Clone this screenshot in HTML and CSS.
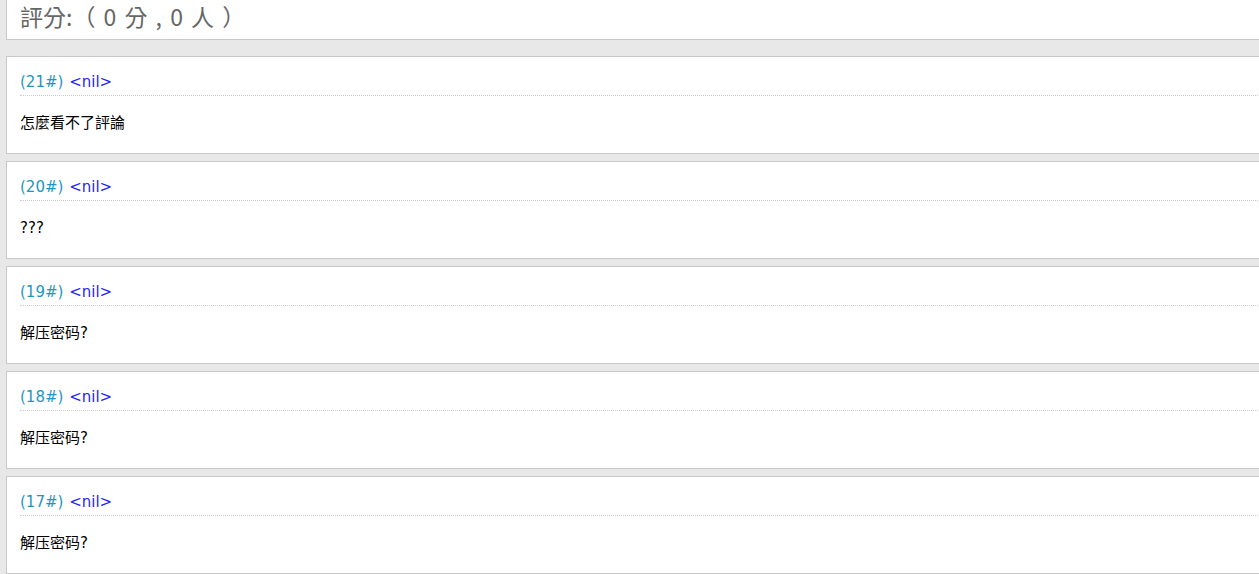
FILE: index.html
```html
<!DOCTYPE html>
<html lang="zh-Hant">
<head>
<meta charset="UTF-8" />
<title>評論</title>
<link rel="stylesheet" href="styles.css">
</head>
<body>
<div class="page">
  <div class="rating-box">評分:（ 0 分 , 0 人 ）</div>

  <div class="post">
    <div class="post-head"><span class="floor">(21#)</span> <span class="author">&lt;nil&gt;</span></div>
    <div class="post-body">怎麼看不了評論</div>
  </div>
  <div class="post">
    <div class="post-head"><span class="floor">(20#)</span> <span class="author">&lt;nil&gt;</span></div>
    <div class="post-body">???</div>
  </div>
  <div class="post">
    <div class="post-head"><span class="floor">(19#)</span> <span class="author">&lt;nil&gt;</span></div>
    <div class="post-body">解压密码?</div>
  </div>
  <div class="post">
    <div class="post-head"><span class="floor">(18#)</span> <span class="author">&lt;nil&gt;</span></div>
    <div class="post-body">解压密码?</div>
  </div>
  <div class="post">
    <div class="post-head"><span class="floor">(17#)</span> <span class="author">&lt;nil&gt;</span></div>
    <div class="post-body">解压密码?</div>
  </div>
</div>
</body>
</html>
```

FILE: styles.css
```css
body {
  margin:0; padding:0;
  background:#e8e8e8;
  overflow:hidden;
  font-family: "DejaVu Sans", "Noto Sans CJK TC", sans-serif;
}
.page {
  padding-left:6px;
  margin-right:-10px;
}

/* 評分 */
.rating-box {
  background:#fff;
  border:1px solid #c8c8c8;
  border-top:none;
  height:32px;
  padding:0 0 7px 13px;
  line-height:32px;
  font-family: "Noto Sans CJK TC", sans-serif;
  font-size:23px;
  word-spacing:3px;
  color:#666;
  margin-bottom:16px;
}

/* 評論 */
.post {
  background:#fff;
  border:1px solid #c8c8c8;
  padding:15px 0 20px 13px;
  margin-bottom:7px;
}
.post-head {
  font-size:15px;
  line-height:20px;
  padding-bottom:3px;
  border-bottom:1px dotted #ccc;
}
.floor { color:#1e96c0; }
.author { color:#1f1fff; margin-left:1px; }
.post-body {
  margin-top:17px;
  font-size:15px;
  line-height:20px;
  color:#000;
}
```
